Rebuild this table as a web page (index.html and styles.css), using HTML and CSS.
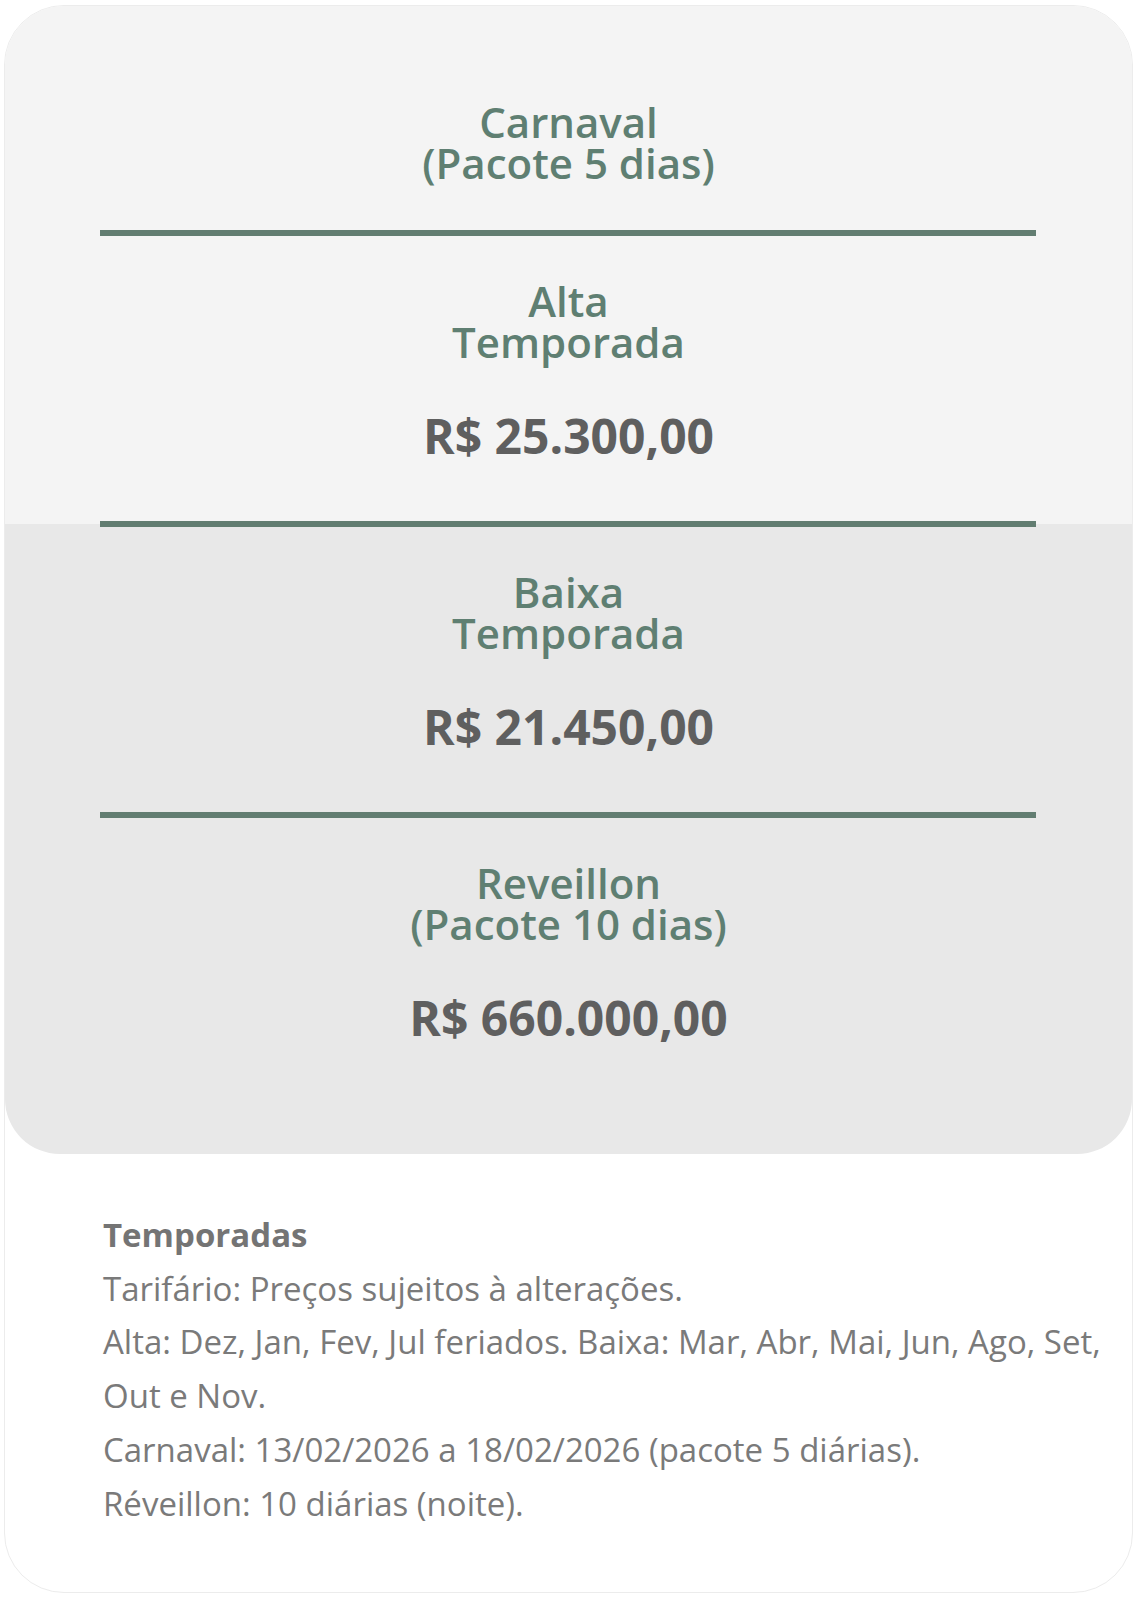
FILE: index.html
```html
<!DOCTYPE html>
<html lang="pt-BR">
<head>
<meta charset="utf-8">
<title>Tarifas</title>
<link rel="stylesheet" href="styles.css">
</head>
<body>
<div class="card">
  <div class="col col-light">
    <div class="item item-first">
      <h3 class="title">Carnaval<br>(Pacote 5 dias)</h3>
    </div>
    <div class="sep"></div>
    <div class="item">
      <h3 class="title">Alta<br>Temporada</h3>
      <p class="price">R$ 25.300,00</p>
    </div>
    <div class="sep sep-edge"></div>
  </div>
  <div class="col col-dark">
    <div class="item item-top">
      <h3 class="title">Baixa<br>Temporada</h3>
      <p class="price">R$ 21.450,00</p>
    </div>
    <div class="sep"></div>
    <div class="item item-last">
      <h3 class="title">Reveillon<br>(Pacote 10 dias)</h3>
      <p class="price">R$ 660.000,00</p>
    </div>
  </div>
  <div class="notes">
    <p class="notes-head">Temporadas</p>
    <p>Tarifário: Preços sujeitos à alterações.</p>
    <p>Alta: Dez, Jan, Fev, Jul feriados. Baixa: Mar, Abr, Mai, Jun, Ago, Set, Out e Nov.</p>
    <p>Carnaval: 13/02/2026 a 18/02/2026 (pacote 5 diárias).</p>
    <p>Réveillon: 10 diárias (noite).</p>
  </div>
</div>
</body>
</html>
```

FILE: styles.css
```css
* { box-sizing: border-box; }
html, body { margin: 0; padding: 0; background: #ffffff; }
body { font-family: "Open Sans", "Noto Sans", sans-serif; }

.card {
  margin: 5px 4px 8px;
  border: 1px solid #ececec;
  border-radius: 60px;
  background: #ffffff;
  overflow: hidden;
}

.col-light { background: #f4f4f4; }
.col-dark { background: #e8e8e8; border-radius: 0 0 55px 55px; }

.item {
  padding: 44px 0 61px;
  text-align: center;
}
.item-first { padding: 95px 0 47px; }
.item-top { padding-top: 47px; }
.item-last { padding-bottom: 112px; }

.title {
  margin: 0;
  font-size: 42px;
  line-height: 41px;
  font-weight: 600;
  color: #5f7f72;
}

.price {
  margin: 50px 0 0;
  font-size: 48px;
  line-height: 48px;
  font-weight: 700;
  color: #5f5f5f;
  font-stretch: 88%;
}

.sep {
  height: 6px;
  margin: 0 96px 0 95px;
  background: #627d71;
}
.sep-edge {
  position: relative;
  z-index: 1;
  margin-bottom: -3px;
}

.notes {
  padding: 54px 30px 62px 98px;
  color: #7a7a7a;
  font-size: 33px;
  line-height: 53.7px;
}
.notes p { margin: 0; }
.notes-head { font-weight: 700; color: #747474; }
```
